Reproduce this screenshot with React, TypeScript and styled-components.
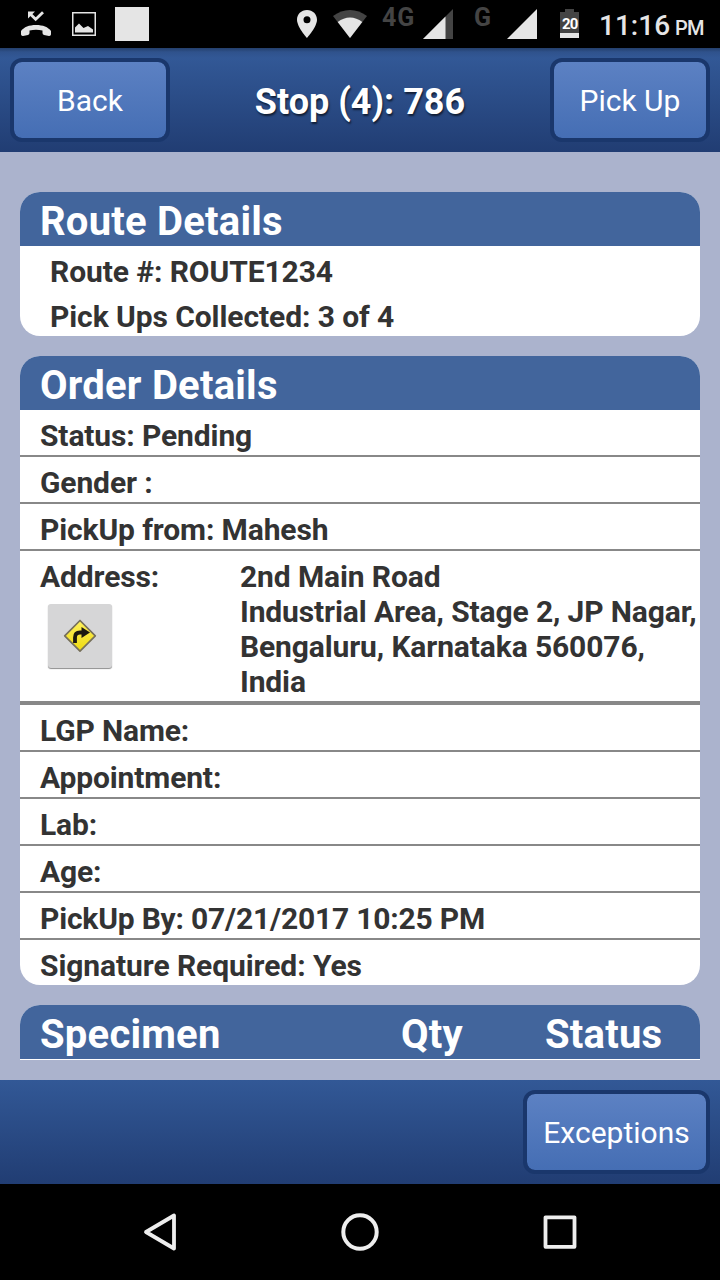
import React from "react";
import styled, { createGlobalStyle } from "styled-components";

const GlobalStyle = createGlobalStyle`
  * { box-sizing: border-box; }
  body { margin: 0; background: #abb3cd; font-family: Roboto, "Liberation Sans", sans-serif; }
`;

const Screen = styled.div`
  display: flex;
  flex-direction: column;
  width: 720px;
  height: 1280px;
  overflow: hidden;
  background: #abb3cd;
  color: #333;
`;

const StatusBar = styled.div`
  display: flex;
  flex: none;
  height: 48px;
  background: #000;
  color: #e5e5e5;
`;

const Slot = styled.div<{ $gap: number; $width: number }>`
  flex: none;
  width: ${(p) => p.$width}px;
  margin-left: ${(p) => p.$gap}px;
  height: 48px;
  svg { display: block; overflow: visible; }
`;

const Network = styled(Slot)`
  color: #444;
  font-size: 25px;
  font-weight: 700;
  letter-spacing: 0.8px;
  line-height: 35px;
  white-space: nowrap;
`;

const Clock = styled.div`
  margin-left: 20px;
  display: flex;
  align-items: baseline;
  gap: 5px;
  font-size: 28px;
  font-weight: 500;
  line-height: 51px;
  white-space: nowrap;
`;

const Meridiem = styled.span`
  font-size: 20px;
  letter-spacing: -0.8px;
`;

const Bar = styled.div<{ $height: number }>`
  flex: none;
  display: flex;
  align-items: flex-start;
  justify-content: space-between;
  height: ${(p) => p.$height}px;
  padding: 10px;
  background: linear-gradient(#325896, #213d73);
`;

const TopBar = styled(Bar)`
  background: linear-gradient(#243f6b 0, #2f528c 4px, #325896 10px, #213d73 100%);
`;

const BarButton = styled.button<{ $width: number }>`
  flex: none;
  width: ${(p) => p.$width}px;
  height: 84px;
  padding: 2px 0 0;
  border: 4px solid #1a376c;
  border-radius: 12px;
  background: linear-gradient(#5c81c3, #456eb4) padding-box;
  color: #fff;
  font: 400 30px/74px Roboto, sans-serif;
`;

const Title = styled.h1`
  margin: 0;
  padding-top: 2px;
  color: #fff;
  font-size: 36px;
  font-weight: 700;
  line-height: 84px;
  text-shadow: 1px 2px 2px rgba(0, 0, 0, 0.6);
`;

const Content = styled.main`
  flex: none;
  display: flex;
  flex-direction: column;
  gap: 20px;
  height: 928px;
  padding: 40px 20px 20px;
`;

const Card = styled.section<{ $open?: boolean }>`
  flex: none;
  overflow: hidden;
  border-radius: ${(p) => (p.$open ? "20px 20px 0 0" : "20px")};
  background: #fff;
  padding-bottom: ${(p) => (p.$open ? 1 : 0)}px;
`;

const CardTitle = styled.h2`
  display: flex;
  margin: 0;
  height: 54px;
  padding: 6px 20px 0;
  background: #42659c;
  color: #fff;
  font-size: 40px;
  font-weight: 700;
  letter-spacing: 0.22px;
  line-height: 47px;
`;

const Column = styled.span<{ $width: number }>`
  width: ${(p) => p.$width}px;
`;

const Row = styled.div<{ $inset?: number; $line?: number; $tracking?: number }>`
  display: flex;
  padding: 8px 0 2px ${(p) => p.$inset ?? 20}px;
  border-bottom: ${(p) => p.$line ?? 0}px solid #888;
  font-size: 30px;
  font-weight: 700;
  letter-spacing: ${(p) => p.$tracking ?? -0.08}px;
  line-height: 35px;
  white-space: nowrap;
`;

const AddressLabel = styled.div`
  width: 200px;
`;

const Directions = styled.button`
  display: block;
  width: 64px;
  height: 64px;
  margin: 10px 0 0 8px;
  padding: 0;
  border: 0;
  border-radius: 3px;
  background: #d6d6d7;
  box-shadow: 0 1px 1px rgba(0, 0, 0, 0.45);
  svg { display: block; }
`;

const NavBar = styled.nav`
  flex: none;
  display: flex;
  justify-content: center;
  align-items: center;
  gap: 160px;
  height: 96px;
  background: #000;
`;

const beforeAddress = ["Status: Pending", "Gender :", "PickUp from: Mahesh"];
const afterAddress = ["LGP Name:", "Appointment:", "Lab:", "Age:"];

export default function App() {
  return (
    <Screen>
      <GlobalStyle />
      <StatusBar>
        <Slot $gap={20} $width={32}>
          <svg width="32" height="48" viewBox="20 0 32 48">
            <path d="M21 34.500 V31 C24 27 29 25 36 25 S48 27 51 31 V34.500 Q50.500 36 49 36 L44 35 Q42.500 34.500 42.500 33 V30.500 Q36 28.800 29.500 30.500 V33 Q29.500 34.500 28 35 L23 36 Q21.500 36 21 34.500Z" fill="#e5e5e5" />
            <path d="M43 12.300 L35.700 19.300 L29.500 13.200" fill="none" stroke="#e5e5e5" strokeWidth="2.800" />
            <path d="M28 11.500 H35 L28 18.500Z" fill="#e5e5e5" />
          </svg>
        </Slot>
        <Slot $gap={20} $width={24}>
          <svg width="24" height="48" viewBox="72 0 24 48">
            <rect x="72.750" y="12.750" width="22.500" height="22.500" fill="none" stroke="#e5e5e5" strokeWidth="1.500" />
            <path d="M75 32.500 V27.500 L79 23.500 L83.500 28 L88 26 L93 29.500 V32.500Z" fill="#e5e5e5" />
          </svg>
        </Slot>
        <Slot $gap={19} $width={34}>
          <svg width="34" height="48"><rect y="7" width="34" height="34" fill="#e5e5e5" /></svg>
        </Slot>
        <Slot $gap={148} $width={20}>
          <svg width="20" height="48" viewBox="297 0 20 48">
            <path fillRule="evenodd" d="M307 10 C301.200 10 297 14.300 297 19.800 C297 27 307 38 307 38 S317 27 317 19.800 C317 14.300 312.800 10 307 10Z M307 16.300 A3.500 3.500 0 1 1 307 23.300 A3.500 3.500 0 1 1 307 16.300Z" fill="#e5e5e5" />
          </svg>
        </Slot>
        <Slot $gap={16} $width={34}>
          <svg width="34" height="48" viewBox="333 0 34 48">
            <path d="M350 38 L333 16 Q341 10 350 10 T367 16Z" fill="#444" />
            <path d="M350 38 L337.700 22 Q343.500 17.500 350 17.500 T362.300 22Z" fill="#e5e5e5" />
          </svg>
        </Slot>
        <Network $gap={15} $width={34}>4G</Network>
        <Slot $gap={7} $width={30}>
          <svg width="30" height="48" viewBox="423 0 30 48">
            <path d="M423 39 L453 9 V39Z" fill="#444" />
            <path d="M423 39 L445.500 16.500 V39Z" fill="#e5e5e5" />
          </svg>
        </Slot>
        <Network $gap={21} $width={19}>G</Network>
        <Slot $gap={14} $width={30}>
          <svg width="30" height="48" viewBox="507 0 30 48"><path d="M507 39 L537 9 V39Z" fill="#e5e5e5" /></svg>
        </Slot>
        <Slot $gap={23} $width={19}>
          <svg width="19" height="48" viewBox="560 0 19 48">
            <path d="M565 9 H574 V12 H579 V38 H560 V12 H565Z" fill="#444" />
            <rect x="560" y="33" width="19" height="5" fill="#e5e5e5" />
            <text x="562" y="29" letterSpacing="-0.8" fontFamily="Roboto" fontWeight="700" fontSize="15" fill="#fff">20</text>
          </svg>
        </Slot>
        <Clock>11:16<Meridiem>PM</Meridiem></Clock>
      </StatusBar>

      <TopBar as="header" $height={104}>
        <BarButton $width={160}>Back</BarButton>
        <Title>Stop (4): 786</Title>
        <BarButton $width={160}>Pick Up</BarButton>
      </TopBar>

      <Content>
        <Card>
          <CardTitle>Route Details</CardTitle>
          <Row $inset={30}>Route #: ROUTE1234</Row>
          <Row $inset={30}>Pick Ups Collected: 3 of 4</Row>
        </Card>
        <Card>
          <CardTitle>Order Details</CardTitle>
          {beforeAddress.map((text) => <Row key={text} $line={2} $tracking={-0.12}>{text}</Row>)}
          <Row $line={4} $tracking={-0.12}>
            <AddressLabel>
              Address:
              <Directions aria-label="Directions">
                <svg width="64" height="64" viewBox="0 0 64 64">
                  <defs>
                    <linearGradient id="sign" x1="0" y1="0" x2="0" y2="1">
                      <stop offset="0" stopColor="#fff15e" />
                      <stop offset="1" stopColor="#eeda10" />
                    </linearGradient>
                  </defs>
                  <path d="M32 16.500 L47.300 31.800 L32 47.100 L16.700 31.800Z" fill="url(#sign)" stroke="#77705a" strokeWidth="1.700" strokeLinejoin="round" />
                  <path d="M27 39 V33.500 Q27 28.500 32 28.500 H35" fill="none" stroke="#1c1810" strokeWidth="3.800" />
                  <path d="M33.500 23 L42 28.500 L33.500 34Z" fill="#1c1810" />
                </svg>
              </Directions>
            </AddressLabel>
            <div>
              2nd Main Road<br />
              Industrial Area, Stage 2, JP Nagar,<br />
              Bengaluru, Karnataka 560076,<br />
              India
            </div>
          </Row>
          {afterAddress.map((text) => <Row key={text} $line={2} $tracking={-0.14}>{text}</Row>)}
          <Row $line={2} $tracking={-0.2}>PickUp By: 07/21/2017 10:25 PM</Row>
          <Row>Signature Required: Yes</Row>
        </Card>
        <Card $open>
          <CardTitle>
            <Column $width={361}>Specimen</Column>
            <Column $width={144}>Qty</Column>
            <Column $width={120}>Status</Column>
          </CardTitle>
        </Card>
      </Content>

      <Bar as="footer" $height={104}>
        <span />
        <BarButton $width={187}>Exceptions</BarButton>
      </Bar>

      <NavBar>
        <svg width="40" height="40" viewBox="0 0 40 40" fill="none" stroke="#eee" strokeWidth="3.800" strokeLinejoin="round">
          <path d="M6 20 L34 3.500 V36.500Z" />
        </svg>
        <svg width="40" height="40" viewBox="0 0 40 40" fill="none" stroke="#eee" strokeWidth="4">
          <circle cx="20" cy="20" r="16.700" />
        </svg>
        <svg width="40" height="40" viewBox="0 0 40 40" fill="none" stroke="#eee" strokeWidth="3.800" strokeLinejoin="round">
          <rect x="5.500" y="5.300" width="29" height="29.500" />
        </svg>
      </NavBar>
    </Screen>
  );
}
